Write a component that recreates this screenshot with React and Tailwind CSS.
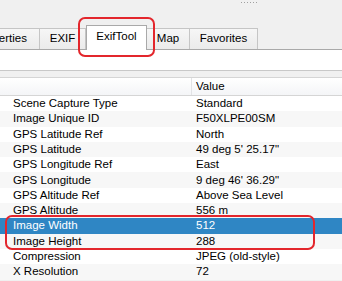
const rows = [
  ['Scene Capture Type', 'Standard'],
  ['Image Unique ID', 'F50XLPE00SM'],
  ['GPS Latitude Ref', 'North'],
  ['GPS Latitude', '49 deg 5\' 25.17"'],
  ['GPS Longitude Ref', 'East'],
  ['GPS Longitude', '9 deg 46\' 36.29"'],
  ['GPS Altitude Ref', 'Above Sea Level'],
  ['GPS Altitude', '556 m'],
  ['Image Width', '512'],
  ['Image Height', '288'],
  ['Compression', 'JPEG (old-style)'],
  ['X Resolution', '72'],
];

function Tab({ label, width }) {
  return (
    <div
      className={`${width} h-[21px] flex items-center justify-center border border-b-0 border-[#c5c5c5] bg-gradient-to-b from-[#f6f6f6] to-[#ebebeb] whitespace-nowrap overflow-hidden`}
    >
      {label}
    </div>
  );
}

export default function App() {
  return (
    <div
      className="relative w-[342px] h-[281px] overflow-hidden bg-[#f0f0f0] text-[11.5px] text-black"
      style={{ fontFamily: '"Liberation Sans", Arial, sans-serif' }}
    >
      {/* splitter grip */}
      <div className="h-[25px] pl-[241px] pt-[2px]">
        <div className="flex gap-[2px]">
          {[0, 1, 2, 3, 4, 5].map((i) => (
            <span key={i} className="w-px h-px bg-[#a0a0a0]" />
          ))}
        </div>
      </div>

      {/* tab bar */}
      <div className="flex items-end h-[24px]">
        <div className="w-[40px] h-[21px] flex items-center justify-end pr-[12px] border-r border-t border-[#c5c5c5] bg-gradient-to-b from-[#f6f6f6] to-[#ebebeb] whitespace-nowrap overflow-hidden">
          Properties
        </div>
        <Tab label="EXIF" width="w-[46px] border-l-0" />
        <div className="relative z-10 w-[61px] h-[25px] -mb-px flex items-center justify-center bg-white border border-b-0 border-[#a9a9a9] pb-[2px]">
          ExifTool
        </div>
        <Tab label="Map" width="w-[43px] border-l-0" />
        <Tab label="Favorites" width="w-[68px] border-l-0" />
      </div>

      {/* pane */}
      <div className="border-t border-[#a9a9a9] bg-white h-[22px] border-b border-b-[#c8c8c8]" />
      <div className="h-[6px]" />

      {/* header */}
      <div className="flex h-[19px] border-t border-b border-[#d5d5d5] bg-gradient-to-b from-white to-[#f4f5f7]">
        <div className="w-[192px] border-r border-[#e2e3e5]" />
        <div className="pl-[4px] flex items-center">Value</div>
      </div>

      {/* rows */}
      <div className="bg-white">
        {rows.map(([k, v], i) => {
          const sel = k === 'Image Width';
          return (
            <div
              key={k}
              className={`flex h-[15.3px] items-center ${
                sel ? 'bg-[#2f86c4] text-white' : i % 2 ? 'bg-[#f7f7f7]' : 'bg-white'
              }`}
            >
              <div className="w-[192px] pl-[13px] whitespace-nowrap">{k}</div>
              <div className="pl-[4px] whitespace-nowrap">{v}</div>
            </div>
          );
        })}
      </div>

      {/* annotation marks */}
      <div className="absolute left-[78px] top-[17px] w-[77px] h-[40px] border-2 border-[#e3262c] rounded-[7px] z-20" />
      <div className="absolute left-[5px] top-[215px] w-[310px] h-[35px] border-2 border-[#e3262c] rounded-[7px] z-20" />
    </div>
  );
}
